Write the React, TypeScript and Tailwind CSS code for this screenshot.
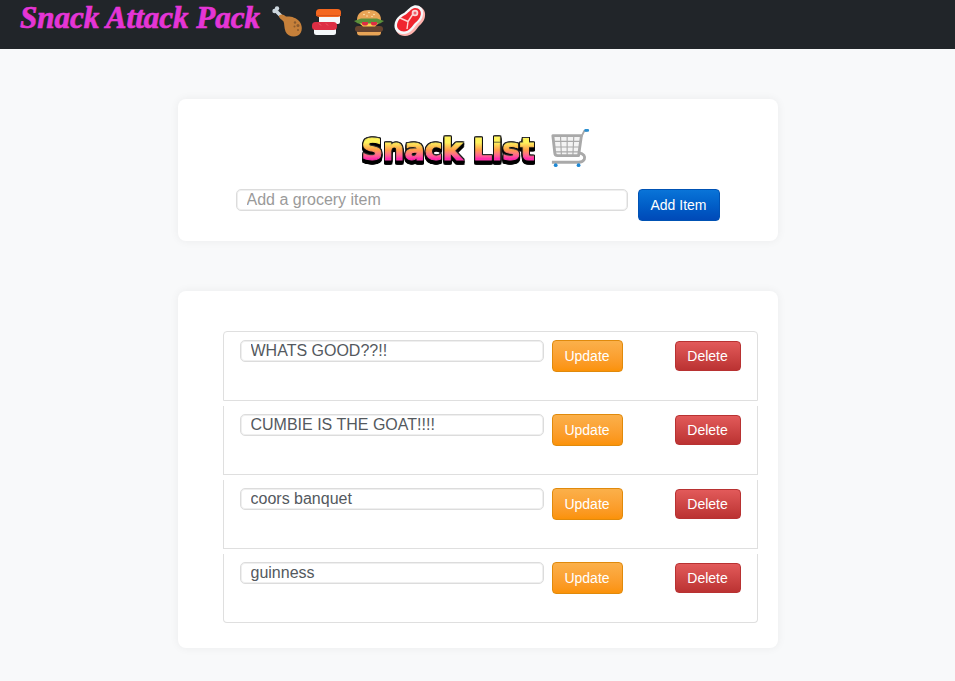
import React from 'react';

const Leg = () => (
  <svg width="32" height="32" viewBox="0 0 32 32">
    <path d="M10 11 L5.5 6.5" stroke="#ccd6dd" strokeWidth="3.5" strokeLinecap="round" />
    <circle cx="3.5" cy="6" r="2.2" fill="#ccd6dd" />
    <circle cx="6" cy="3.5" r="2.2" fill="#ccd6dd" />
    <path d="M8 10.5 C10 8.5 13 9.5 15 11.5 C19 11 25 12 28.5 16.5 C32 21 31.5 28 27 30.5 C22.5 33 16.5 31 14.5 26.5 C13 22.5 13.5 18.5 12.5 16.5 C11 14.5 7.5 13 8 10.5Z" fill="#c6803a" />
    <circle cx="24" cy="17.5" r="1.2" fill="#8b5a2e" />
    <circle cx="27" cy="20.5" r="1.5" fill="#8b5a2e" />
    <circle cx="23.5" cy="21.5" r="1" fill="#8b5a2e" />
    <circle cx="27" cy="25" r="1" fill="#8b5a2e" />
  </svg>
);

const Sushi = () => (
  <svg width="32" height="32" viewBox="0 0 32 32">
    <rect x="7" y="9" width="21" height="10" rx="2" fill="#f5f8fa" />
    <rect x="4" y="4" width="25" height="8" rx="3.5" fill="#f4671f" />
    <path d="M4 10.5h25" stroke="#d9541a" strokeWidth="1" />
    <rect x="2" y="20" width="22" height="10" rx="2.5" fill="#f5f8fa" />
    <rect x="0" y="17" width="25" height="8" rx="3.5" fill="#dd2e44" />
    <path d="M7 18.5l2 2M14 18.5l2 2" stroke="#f0606f" strokeWidth="1" />
  </svg>
);

const Burger = () => (
  <svg width="32" height="32" viewBox="0 0 32 32">
    <path d="M4 15 C4 8 9 5 16 5 C23 5 28 8 28 15Z" fill="#e8a456" />
    <path d="M4 25h24v2.5a3 3 0 0 1-3 3h-18a3 3 0 0 1-3-3Z" fill="#e8a456" />
    <rect x="2" y="21" width="28" height="6" rx="3" fill="#67442f" />
    <path d="M6 18h20l-4 3.5H10Z" fill="#ffcc4d" />
    <path d="M1 16 L8 13.5 H24 L31 16 L27 18.5 H5Z" fill="#5c913b" />
    <path d="M9 17h6v1.5a3 2 0 0 1-6 0ZM18 17h6v1.5a3 2 0 0 1-6 0Z" fill="#dd2e44" />
    <g fill="#ffe8b6">
      <circle cx="11" cy="9.5" r=".8" /><circle cx="16" cy="7.5" r=".8" /><circle cx="21" cy="9.5" r=".8" /><circle cx="14" cy="11" r=".7" /><circle cx="19" cy="11.5" r=".7" />
    </g>
  </svg>
);

const Meat = () => (
  <svg width="32" height="32" viewBox="0 0 32 32">
    <path d="M21 1.5 C27 0 32 5 31 11 C30.5 16 28 18 25 21 C22 25 18 31 11 31 C5 31 1 27 1.5 21 C2 15 6 11 10 9 C14 7 16 3 21 1.5Z" fill="#ffb3ae" />
    <path d="M20 0.5 C26 -0.5 30 4 29 9.5 C28.5 14 26 16.5 23 19 C20 23 16 29 10 29 C4 29 0 25.5 0.5 20 C1 14 5 10.5 9 8.5 C13 6.5 15 2 20 0.5Z" fill="#f5f8fa" />
    <path d="M20.5 3 C25 2.5 27.5 6 26.8 9.5 C26 13.5 24 15.5 21 18 C18 21.5 15 26.5 10 26.5 C5.5 26.5 2.8 23.5 3 20 C3.5 15.5 6.5 12.5 10 10.5 C14 8.5 16.5 4 20.5 3Z" fill="#f0252f" />
    <path d="M6 13 L14 16.5 L19 9 M14 16.5 L13 24" stroke="#ffd4d2" strokeWidth="1.4" fill="none" />
    <circle cx="21" cy="8" r="3.3" fill="#f8d5d5" />
    <circle cx="21" cy="8" r="1.5" fill="#f0606f" />
  </svg>
);

const Cart = () => (
  <svg width="40" height="40" viewBox="0 0 42 42">
    <path d="M3 8 H33 L30 29 H8 C6 29 5 28 5 26 Z" fill="#f3f3f3" stroke="#a9a9a9" strokeWidth="3" strokeLinejoin="round" />
    <path d="M4 14 H32 M5 20 H31 M6 25 H30 M11 8 L12 29 M18 8 V29 M25 8 L24 29" stroke="#a9a9a9" strokeWidth="1.2" />
    <path d="M33 9 L36 3 H39" stroke="#a9a9a9" strokeWidth="2" fill="none" />
    <rect x="36" y="1" width="5" height="3" rx="1.2" fill="#2b8fd0" />
    <path d="M30 26 C36 27 37 30 36 33 C35 35 34 36 30 36 H2" stroke="#a9a9a9" strokeWidth="3" fill="none" />
    <circle cx="6" cy="39" r="2" fill="#1e88d4" />
    <circle cx="30" cy="39" r="2" fill="#1e88d4" />
  </svg>
);

const Item = ({ text, first, last }: any) => (
  <div className={`flex items-start border-x border-b border-[#dfdfdf] pt-2 pr-4 pl-4 ${first ? 'h-[70px] rounded-t border-t' : 'mt-[5px] h-[69px]'} ${last ? 'rounded-b' : ''}`}>
    <input
      readOnly
      value={text}
      className="h-[22px] w-[304px] rounded-[5px] border border-[#dcdcdc] pl-[10px] text-base text-[#54595e] shadow-[inset_0_0_0_1px_#efefef] outline-none"
    />
    <button className="ml-2 h-8 w-[71px] rounded border border-[#e08a0c] bg-gradient-to-b from-[#fbb04a] to-[#fb9206] text-sm text-white">Update</button>
    <button className="mt-px ml-auto h-[30px] w-[66px] rounded border border-[#b83232] bg-gradient-to-b from-[#e25a5a] to-[#bb3232] text-sm text-white">Delete</button>
  </div>
);

export default function App() {
  return (
    <div className="min-h-[681px] bg-[#f8f9fa] font-['Liberation_Sans',sans-serif]">
      <nav className="flex h-[49px] items-start bg-[#212529] pl-5">
        <span className="mt-[-1px] font-['Liberation_Serif',serif] text-[31px] leading-[38px] font-bold whitespace-nowrap text-[#e535d6] italic [-webkit-text-stroke:0.7px_#e535d6]">Snack Attack Pack</span>
        <div className="mt-[5px] ml-[11px] flex gap-[9px]">
          <Leg />
          <Sushi />
          <Burger />
          <Meat />
        </div>
      </nav>

      <main className="mx-auto w-[600px] pt-[50px]">
        <section className="h-[142px] rounded-lg bg-white shadow-[0_0_10px_rgba(0,0,0,0.06)]">
          <div className="flex h-[90px] items-start justify-center pt-[29px] pr-[3px]">
            <h1 className="mt-[6px] font-['DejaVu_Sans',sans-serif] text-[30px] leading-[32px] font-bold whitespace-nowrap [filter:drop-shadow(0_-1px_0_#333)_drop-shadow(1px_0_0_#111)_drop-shadow(-1px_0_0_#111)_drop-shadow(0_2px_0_#000)_drop-shadow(0_2px_0_#000)]">
              <span className="bg-gradient-to-b from-[#fff35c] from-30% via-[#ff9a4a] via-52% to-[#ff2fa8] to-75% bg-clip-text text-transparent [-webkit-text-stroke:1px_transparent]">Snack List</span>
            </h1>
            <span className="ml-4"><Cart /></span>
          </div>
          <div className="flex items-start pl-[58px]">
            <input
              placeholder="Add a grocery item"
              className="h-[22px] w-[392px] rounded-[5px] border border-[#dcdcdc] pl-[10px] text-base shadow-[inset_0_0_0_1px_#efefef] outline-none placeholder:text-[#9a9a9a]"
            />
            <button className="ml-[10px] h-8 w-[82px] rounded border border-[#0052b4] bg-gradient-to-b from-[#0a74d8] to-[#0049b8] text-sm text-white">Add Item</button>
          </div>
        </section>

        <section className="mt-[50px] h-[357px] rounded-lg bg-white pt-10 pr-5 pl-[45px] shadow-[0_0_10px_rgba(0,0,0,0.06)]">
          <Item text="WHATS GOOD??!!" first />
          <Item text="CUMBIE IS THE GOAT!!!!" />
          <Item text="coors banquet" />
          <Item text="guinness" last />
        </section>
      </main>
    </div>
  );
}
